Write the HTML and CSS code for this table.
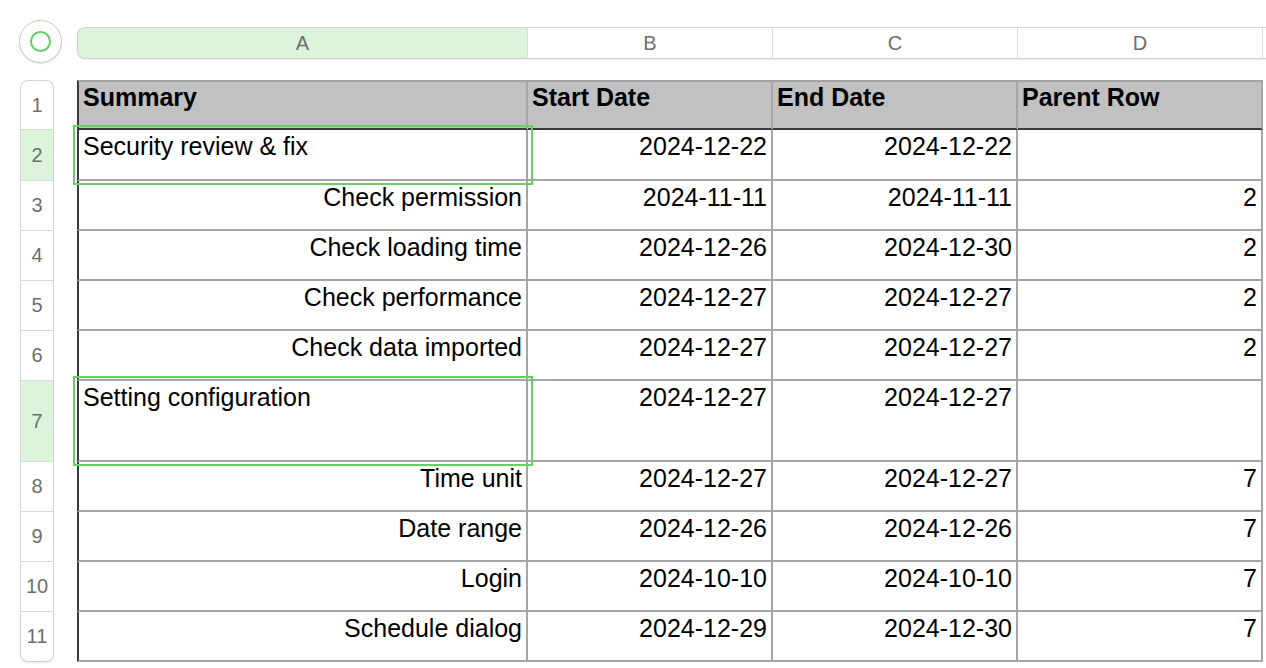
FILE: index.html
```html
<!DOCTYPE html>
<html>
<head>
<meta charset="utf-8">
<link rel="stylesheet" href="styles.css">
</head>
<body>
<div class="sheet">
  <div class="corner">
    <div class="select-all"><span class="ring"></span></div>
  </div>
  <div class="col-bar">
    <div class="col-headers">
      <div class="col-h col-a sel">A</div>
      <div class="col-h col-n">B</div>
      <div class="col-h col-n">C</div>
      <div class="col-h col-n">D</div>
      <div class="col-h col-n"></div>
    </div>
  </div>
  <div class="row-headers">
    <div class="row-h r-first">1</div>
    <div class="row-h sel r-2">2</div>
    <div class="row-h">3</div>
    <div class="row-h">4</div>
    <div class="row-h">5</div>
    <div class="row-h">6</div>
    <div class="row-h sel r-tall">7</div>
    <div class="row-h">8</div>
    <div class="row-h">9</div>
    <div class="row-h">10</div>
    <div class="row-h r-last">11</div>
  </div>
  <div class="table">
    <div class="cell head first">Summary</div>
    <div class="cell head">Start Date</div>
    <div class="cell head">End Date</div>
    <div class="cell head">Parent Row</div>

    <div class="cell first r-2 selected">Security review &amp; fix</div>
    <div class="cell num r-2">2024-12-22</div>
    <div class="cell num r-2">2024-12-22</div>
    <div class="cell num r-2"></div>

    <div class="cell first num">Check permission</div>
    <div class="cell num">2024-11-11</div>
    <div class="cell num">2024-11-11</div>
    <div class="cell num">2</div>

    <div class="cell first num">Check loading time</div>
    <div class="cell num">2024-12-26</div>
    <div class="cell num">2024-12-30</div>
    <div class="cell num">2</div>

    <div class="cell first num">Check performance</div>
    <div class="cell num">2024-12-27</div>
    <div class="cell num">2024-12-27</div>
    <div class="cell num">2</div>

    <div class="cell first num">Check data imported</div>
    <div class="cell num">2024-12-27</div>
    <div class="cell num">2024-12-27</div>
    <div class="cell num">2</div>

    <div class="cell first r-tall selected">Setting configuration</div>
    <div class="cell num r-tall">2024-12-27</div>
    <div class="cell num r-tall">2024-12-27</div>
    <div class="cell num r-tall"></div>

    <div class="cell first num">Time unit</div>
    <div class="cell num">2024-12-27</div>
    <div class="cell num">2024-12-27</div>
    <div class="cell num">7</div>

    <div class="cell first num">Date range</div>
    <div class="cell num">2024-12-26</div>
    <div class="cell num">2024-12-26</div>
    <div class="cell num">7</div>

    <div class="cell first num">Login</div>
    <div class="cell num">2024-10-10</div>
    <div class="cell num">2024-10-10</div>
    <div class="cell num">7</div>

    <div class="cell first num">Schedule dialog</div>
    <div class="cell num">2024-12-29</div>
    <div class="cell num">2024-12-30</div>
    <div class="cell num">7</div>
  </div>
</div>
</body>
</html>
```

FILE: styles.css
```css
html, body {
  margin: 0;
  padding: 0;
  background: #ffffff;
  overflow: hidden;
}

body {
  width: 1266px;
  height: 668px;
  font-family: "Liberation Sans", Arial, Helvetica, sans-serif;
}

.sheet {
  display: grid;
  grid-template-columns: 77px 1189px;
  grid-template-rows: 80px auto;
}

.corner {
  padding: 20px 0 0 19px;
}

.select-all {
  box-sizing: border-box;
  width: 43px;
  height: 43px;
  border-radius: 50%;
  border: 1px solid #c9c9c9;
  background: #ffffff;
  box-shadow: 0 1px 2px rgba(0, 0, 0, 0.12);
  display: flex;
  align-items: center;
  justify-content: center;
}

.ring {
  box-sizing: border-box;
  width: 21px;
  height: 21px;
  border-radius: 50%;
  border: 2px solid #62cd62;
}

.col-bar {
  padding-top: 27px;
  overflow: hidden;
}

.col-headers {
  display: flex;
  height: 32px;
  width: 1500px;
}

.col-h {
  box-sizing: border-box;
  height: 32px;
  display: flex;
  align-items: center;
  justify-content: center;
  font-size: 20px;
  color: #6e6e6e;
  border-top: 1px solid #d2d2d2;
  border-bottom: 1px solid #cfcfcf;
  border-right: 1px solid #dcdcdc;
  box-shadow: 0 1px 1px rgba(0, 0, 0, 0.06);
  background: #ffffff;
}

.col-a {
  width: 451px;
  border-left: 1px solid #cfcfcf;
  border-radius: 8px 0 0 8px;
}

.col-n {
  width: 245px;
}

.col-h.sel {
  background: #dcf4dc;
}

.row-headers {
  display: flex;
  flex-direction: column;
  padding-left: 20px;
}

.row-h {
  box-sizing: border-box;
  width: 34px;
  height: 50px;
  display: flex;
  align-items: center;
  justify-content: center;
  font-size: 20px;
  color: #6e6e6e;
  background: #ffffff;
  border-left: 1px solid #d4d4d4;
  border-right: 1px solid #d4d4d4;
  border-bottom: 1px solid #d9d9d9;
}

.row-h.r-first {
  border-top: 1px solid #d4d4d4;
  border-radius: 8px 8px 0 0;
}

.row-h.r-last {
  border-bottom: 1px solid #cfcfcf;
  border-radius: 0 0 8px 8px;
  box-shadow: 0 1px 2px rgba(0, 0, 0, 0.1);
}

.row-h.r-2 {
  height: 51px;
}

.row-h.r-tall {
  height: 81px;
}

.row-h.sel {
  background: #dcf4dc;
}

.table {
  display: grid;
  grid-template-columns: 451px 245px 245px 245px;
  grid-template-rows: 50px 51px 50px 50px 50px 50px 81px 50px 50px 50px 50px;
}

.cell {
  box-sizing: border-box;
  padding: 1px 4px 0 4px;
  font-size: 25px;
  line-height: 30px;
  color: #000000;
  background: #ffffff;
  border-right: 2px solid #a6a6a6;
  border-bottom: 2px solid #a6a6a6;
  white-space: nowrap;
}

.cell.first {
  border-left: 2px solid #3a3a3a;
}

.cell.head {
  padding-top: 0;
  font-weight: bold;
  background: #c0c1c0;
  border-top: 2px solid #a3a3a3;
  border-bottom: 2px solid #3a3a3a;
}

.cell.num {
  text-align: right;
}

.cell.selected {
  position: relative;
}

.cell.selected::after {
  content: "";
  position: absolute;
  top: -5px;
  left: -6px;
  right: -7px;
  bottom: -6px;
  border: 2px solid #66cf66;
  pointer-events: none;
}
```
